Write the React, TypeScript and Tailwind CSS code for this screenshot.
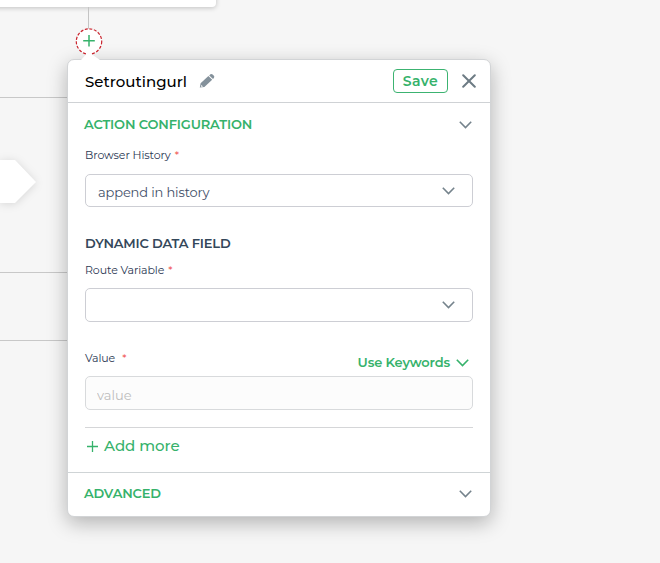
import React from "react";

const Chevron = ({ className = "" }: { className?: string }) => (
  <svg className={className} width="14" height="10" viewBox="0 0 14 10" fill="none" stroke="currentColor" strokeWidth="1.6">
    <path d="M0.8 1.8 6.5 7.5 12.2 1.8" />
  </svg>
);

const Label = ({ text, gap = "ml-1" }: { text: string; gap?: string }) => (
  <div className="flex h-[18px] items-center text-[11px] tracking-[-0.08px] text-[#2b3853]">
    <span>{text}</span>
    <span className={`${gap} text-[#f0524f]`}>*</span>
  </div>
);

const Select = ({ value, className }: { value: string; className: string }) => (
  <div className={`flex items-center justify-between rounded-[5px] border border-[#cdced4] pl-3 pr-[16px] ${className}`}>
    <span className="pt-1 text-[13px] tracking-[-0.14px] text-[#435069]">{value}</span>
    <Chevron className="text-[#75838c]" />
  </div>
);

export default function App() {
  return (
    <div className="relative h-[563px] w-[660px] overflow-hidden bg-[#f6f6f6] font-['Montserrat','Inter',sans-serif]">
      <div className="absolute -left-2 -top-4 h-[23px] w-[224px] rounded-[4px] bg-white shadow-[0_1px_5px_rgba(0,0,0,0.22)]" />
      <div className="absolute left-[88px] top-[7px] h-[22px] w-px bg-[#c4c4c4]" />
      <div className="absolute left-0 top-[97px] h-px w-[68px] bg-[#c8c8c8]" />
      <div className="absolute left-0 top-[272px] h-px w-[68px] bg-[#c8c8c8]" />
      <div className="absolute left-0 top-[340px] h-px w-[68px] bg-[#c8c8c8]" />
      <svg className="absolute left-0 top-[150px] drop-shadow-[0_1px_4px_rgba(0,0,0,0.13)]" width="46" height="64">
        <path d="M-8 10H15L36 32 15 53H-8Z" fill="#fff" />
      </svg>

      <div className="absolute left-[67px] top-[59px] flex h-[458px] w-[424px] flex-col rounded-[7px] border border-[#d2d4d6] bg-white shadow-[0_6px_20px_rgba(0,0,0,0.28)]">
        <div className="flex h-[43px] shrink-0 items-center border-b border-[#cfd2d5] pl-[17px] pr-[14px]">
          <h1 className="pt-[2px] text-[15px] font-medium tracking-[0.02px] text-black">Setroutingurl</h1>
          <svg className="ml-3 text-[#84919b]" width="16" height="16" viewBox="0 0 16 16" fill="currentColor">
            <path d="M0.8 14.6 1.6 10.2 9.4 3.1 13.2 6.8 5.4 13.9ZM10.2 2.4 11.4 1.3Q12.6.5 13.6 1.4L14.9 2.7Q15.8 3.8 14.9 4.9L14 6Z" />
            <path d="M2.3 11.9 4.1 13.5 1.9 13.8Z" fill="#fff" />
          </svg>
          <button className="ml-auto h-6 w-[55px] rounded-[4px] border border-[#3cb371] text-[14px] font-semibold leading-[22px] tracking-[0.4px] text-[#36b26b]">Save</button>
          <svg className="ml-[14px] text-[#6d7b84]" width="14" height="14" viewBox="0 0 14 14" stroke="currentColor" strokeWidth="2" strokeLinecap="round">
            <path d="M1.2 1.2 12.8 12.8M12.8 1.2 1.2 12.8" />
          </svg>
        </div>

        <div className="flex flex-col px-[17px]">
          <div className="flex h-[43px] items-center justify-between">
            <h2 className="-ml-px text-[13px] font-semibold tracking-[-0.15px] text-[#36b26b]">ACTION CONFIGURATION</h2>
            <Chevron className="text-[#75838c]" />
          </div>
          <Label text="Browser History" />
          <Select value="append in history" className="mt-[10px] h-[33px]" />
          <h3 className="mt-[26px] h-5 text-[13px] font-semibold leading-5 tracking-[-0.18px] text-[#34475a]">DYNAMIC DATA FIELD</h3>
          <div className="mt-2">
            <Label text="Route Variable" />
          </div>
          <Select value="" className="mt-[9px] h-[34px]" />
          <div className="mt-[27px] flex h-[27px] justify-between">
            <Label text="Value" gap="ml-[7px]" />
            <button className="mr-[3px] flex h-7 items-center gap-[6px] text-[13px] font-semibold tracking-[-0.16px] text-[#36b26b]">
              Use Keywords
              <Chevron />
            </button>
          </div>
          <input
            className="h-[34px] rounded-[5px] border border-[#d8dadc] bg-[#fcfcfc] px-[11px] pt-1 text-[13px] placeholder:text-[#bdbdbd]"
            placeholder="value"
          />
          <div className="mt-[17px] h-px bg-[#d5d6d8]" />
          <button className="flex h-9 items-center gap-[6px] pl-[2px] text-[15px] font-medium tracking-[-0.03px] text-[#36b26b]">
            <svg width="11" height="11" viewBox="0 0 11 11" stroke="currentColor" strokeWidth="1.3">
              <path d="M5.5 0V11M0 5.5H11" />
            </svg>
            Add more
          </button>
        </div>
        <div className="mt-auto flex h-[44px] items-center justify-between border-t border-[#cfd4d6] px-[17px] pb-px">
          <h2 className="-ml-px text-[13px] font-semibold tracking-[-0.18px] text-[#36b26b]">ADVANCED</h2>
          <Chevron className="text-[#75838c]" />
        </div>
      </div>

      <svg className="absolute left-[70px] top-[22px]" width="38" height="46" fill="none">
        <circle cx="19" cy="19.5" r="12.7" fill="#fff" stroke="#c9222c" strokeWidth="1.2" strokeDasharray="3 1.6" />
        <path d="M19 13V24.6M13.2 18.8H24.8" stroke="#36b26b" strokeWidth="1.5" />
        <path d="M19 30 Q20.5 30 22 32.5L30 38 20 46 11 38 16 32.5Q17.5 30 19 30" fill="#fff" />
      </svg>
    </div>
  );
}
